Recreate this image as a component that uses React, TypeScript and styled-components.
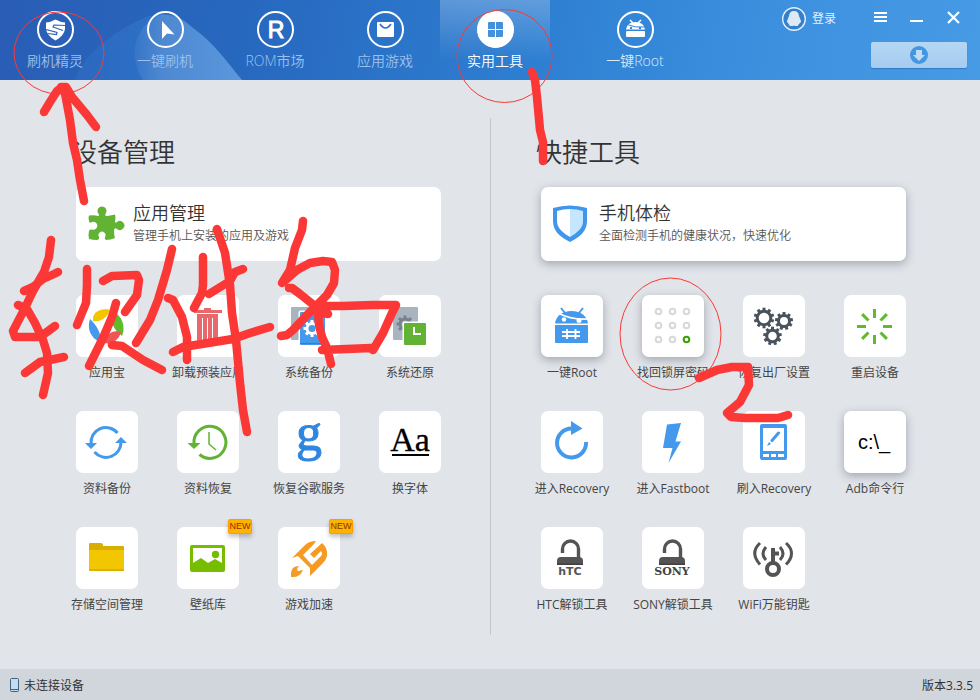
import React from 'react';
import styled, { createGlobalStyle, css } from 'styled-components';

const sans = '"Open Sans", "Noto Sans CJK SC", sans-serif';

const GlobalStyle = createGlobalStyle`
  * { box-sizing: border-box; }
  body { margin: 0; font-family: ${sans}; background: #e1e4e9; }
  button { font: inherit; color: inherit; border: 0; padding: 0; background: none; cursor: pointer; }
  svg { display: block; overflow: visible; }
`;

const Page = styled.div`
  position: relative;
  display: flex;
  flex-direction: column;
  min-height: 100vh;
  overflow: hidden;
`;

const Header = styled.header`
  position: relative;
  display: flex;
  justify-content: space-between;
  height: 80px;
  background: linear-gradient(100deg, #2a5db5 0%, #2768bf 25%, #2e7fd2 55%, #3a8edd 75%, #479be5 100%);
`;

const Mountain = styled.svg`
  position: absolute;
  left: 75px;
  top: 0;
`;

const Nav = styled.nav`
  position: relative;
  display: flex;
`;

const NavButton = styled.button<{ $active?: boolean; $spaced?: boolean }>`
  display: flex;
  flex-direction: column;
  align-items: center;
  width: 110px;
  padding-top: 11px;
  margin-left: ${p => (p.$spaced ? 30 : 0)}px;
  font-size: 14px;
  font-weight: 350;
  line-height: 20px;
  color: ${p => (p.$active ? '#fff' : p.$spaced ? '#d8eafb' : '#9cc0ea')};
  ${p => p.$active && css`background: linear-gradient(180deg, rgba(255,255,255,.24), rgba(255,255,255,0) 75%);`}
  svg { margin-bottom: 3px; }
`;

const HeaderSide = styled.div`
  display: flex;
  flex-direction: column;
  gap: 11px;
  width: 198px;
  padding: 7px 13px 0 0;
`;

const WindowRow = styled.div`
  display: flex;
  align-items: flex-start;
  gap: 23px;
  height: 24px;
`;

const LoginButton = styled.button`
  display: flex;
  align-items: center;
  gap: 6px;
  margin-right: 15px;
  font-size: 12px;
  line-height: 24px;
  color: #e4f0fb;
`;

const WindowButton = styled.button`
  width: 13px;
  height: 20px;
`;

const DownloadButton = styled.button`
  align-self: flex-end;
  display: flex;
  align-items: center;
  justify-content: center;
  width: 96px;
  height: 26px;
  border-radius: 2px;
  background: linear-gradient(#b5d7f3, #a4cbf0);
  box-shadow: 0 1px 1px rgba(20, 80, 150, .4);
`;

const Main = styled.main`
  display: flex;
  flex: 1;
  background: #e1e4e9;
`;

const Divider = styled.div`
  width: 1px;
  margin: 38px 0 34px;
  background: #c4c8cc;
`;

const Section = styled.section<{ $side: 'left' | 'right' }>`
  flex: 1;
  padding: ${p => (p.$side === 'left' ? '54px 49px 30px 76px' : '54px 74px 30px 50px')};
`;

const SectionTitle = styled.h2`
  margin: 0 0 17px -5px;
  font-size: 26px;
  font-weight: 350;
  line-height: 36px;
  color: #333;
`;

const raised = css`box-shadow: 0 3px 10px rgba(50, 60, 70, .36);`;

const FeatureCard = styled.button<{ $raised?: boolean }>`
  display: flex;
  align-items: center;
  gap: 9px;
  width: 100%;
  height: 74px;
  padding-left: 12px;
  text-align: left;
  background: #fff;
  border-radius: 7px;
  ${p => p.$raised && raised}
`;

const FeatureTitle = styled.div`
  font-size: 18px;
  font-weight: 350;
  line-height: 23px;
  color: #333;
`;

const FeatureText = styled.div`
  font-size: 12px;
  font-weight: 350;
  line-height: 22px;
  color: #555;
`;

const Grid = styled.div`
  display: grid;
  grid-template-columns: repeat(4, 62px);
  justify-content: space-between;
  row-gap: 30px;
  margin-top: 34px;
`;

const Tool = styled.button`
  display: flex;
  flex-direction: column;
  align-items: center;
  gap: 8px;
  font-size: 12px;
  line-height: 16px;
  color: #444;
  white-space: nowrap;
`;

const Tile = styled.span<{ $raised?: boolean }>`
  position: relative;
  width: 62px;
  height: 62px;
  border-radius: 7px;
  background: #fff;
  ${p => p.$raised && raised}
`;

const NewBadge = styled.span`
  position: absolute;
  top: -8px;
  right: -13px;
  width: 24px;
  height: 15px;
  border: 1px solid #ff9c00;
  border-radius: 2px;
  background: #ffb300;
  box-shadow: 0 3px 4px rgba(60, 60, 70, .3);
  font: 9px/13px "Liberation Sans", sans-serif;
  text-align: center;
  color: #8a3200;
`;

const Footer = styled.footer`
  display: flex;
  align-items: center;
  justify-content: space-between;
  height: 31px;
  padding: 0 7px 0 10px;
  background: #d0d6dc;
  font-size: 12px;
  color: #333;
`;

const Status = styled.div`
  display: flex;
  align-items: center;
  gap: 5px;
`;

const Ink = styled.svg`
  position: absolute;
  left: 0;
  top: 0;
  pointer-events: none;
`;

const blue = '#4499ed';
const green = '#62b233';
const dark = '#545454';

const Gear = ({ x, y, r, color, w = 3, teeth = 8 }: { x: number; y: number; r: number; color: string; w?: number; teeth?: number }) => (
  <g stroke={color} fill="none">
    <circle cx={x} cy={y} r={r} strokeWidth={w} />
    {Array.from({ length: teeth }, (_, i) => (
      <path key={i} strokeWidth="3" transform={`rotate(${(i * 360) / teeth} ${x} ${y})`} d={`M${x} ${y - r}v${-w / 2 - 2}`} />
    ))}
  </g>
);

const Lock = () => (
  <>
    <path d="M21.500 26v-4a8 8 0 0 1 16 0v10" fill="none" stroke={dark} strokeWidth="3.400" />
    <path d="M16 38v-4q0-4 4-4h18q4 0 4 4v4z" fill={dark} />
    <path d="M16 36.500h26v1.500h-26z" fill="#404040" />
  </>
);

const icons: Record<string, React.ReactNode> = {
  yyb: (
    <>
      <path d="M17 26C16 17 24 13 33 14.500C34 20 25 28 17 26z" fill="#f2c500" />
      <path d="M37 17C46 20 50 32 46 41C38 36 33 25 37 17z" fill="#60bb2a" />
      <path d="M14 24C20 30 26 38 24 47C14 43 11 33 14 24z" fill={blue} />
      <path d="M28 48C30 39 37 34 45 37C43 45 36 50 28 48z" fill="#f05454" />
    </>
  ),
  trash: (
    <g fill="#e8696b">
      <path d="M27 13h7v2h11v3H17v-3h10z" />
      <path d="M20 19h21v30H20z" />
      <path d="M25.500 23v24M30.500 23v24M35.500 23v24" stroke="#fff" />
    </g>
  ),
  sysBackup: (
    <>
      <rect x="13" y="12" width="30" height="33" rx="1" fill="#aab4bf" />
      <rect x="20.500" y="15.500" width="28" height="36" rx="2" fill="#fff" />
      <rect x="22" y="17" width="25" height="33" rx="1" fill={blue} />
      <path d="M22 48.500h25" stroke="#2f7fd0" />
      <Gear x={34} y={33.5} r={5} color="#fff" />
    </>
  ),
  sysRestore: (
    <>
      <rect x="14" y="12" width="25" height="33" rx="1" fill="#aab4bf" />
      <Gear x={26} y={29} r={5} color="#77828e" />
      <rect x="23.500" y="26.500" width="26" height="26" rx="2" fill="#fff" />
      <rect x="25" y="28" width="22" height="22" rx="1" fill={green} />
      <path d="M35 32v7h7" fill="none" stroke="#fff" strokeWidth="2" />
    </>
  ),
  dataBackup: (
    <>
      <path d="M15 33A15 15 0 0 1 41.500 22M18.500 41A15 15 0 0 0 45 31" fill="none" stroke={blue} strokeWidth="3" />
      <path d="M9 32h12l-6 6zM39 32h12l-6-6z" fill={blue} />
    </>
  ),
  dataRestore: (
    <>
      <path d="M17 33A16 16 0 1 1 22.500 43.500" fill="none" stroke={green} strokeWidth="3" />
      <path d="M10.500 32h13l-6.500 6z" fill={green} />
      <path d="M32 21v12l7 6" fill="none" stroke={green} strokeWidth="1.500" />
    </>
  ),
  google: (
    <text x="31" y="39" fontFamily="Liberation Serif, serif" fontSize="52" fill="#2f86e0" stroke="#2f86e0" strokeWidth="1" textAnchor="middle">g</text>
  ),
  font: (
    <>
      <text x="31" y="40" fontFamily="Liberation Serif, serif" fontSize="34" textAnchor="middle" stroke="#000" strokeWidth=".3">Aa</text>
      <path d="M13 44h37" stroke="#000" strokeWidth="2" />
    </>
  ),
  folder: (
    <>
      <path d="M13 17q0-1 1-1h11q2 0 2 2v1h20q1 0 1 1v6H13z" fill="#d8ae00" />
      <path d="M13 23h35v20q0 1-1 1H14q-1 0-1-1z" fill="#f2c600" />
      <path d="M13 42h35v1q0 1-1 1H14q-1 0-1-1z" fill="#dbb100" />
    </>
  ),
  picture: (
    <>
      <rect x="13" y="18" width="35" height="27" rx="2" fill="#76bd00" />
      <path d="M16 21h29v15l-7-4-7 4-7-5-8 5z" fill="#fff" />
      <circle cx="38.500" cy="27.500" r="3.700" fill="#76bd00" />
    </>
  ),
  rocket: (
    <g fill="#f59b23">
      <path d="M14 31L27 18Q31 14 38 14L36 17L25 28L34 38L43 29Q45 27 43 24L36 31L32 27L44 16Q50 21 49 29Q48 33 45 36L32 49V41L20 29z" />
      <path d="M13 50Q12 39 21 39Q18 42 20 44L25 43Q22 51 13 50z" />
    </g>
  ),
  root: (
    <>
      <path d="M14 28.500C15 21 21 16 30.500 16S46 21 47 28.500z" fill={blue} />
      <path d="M20 13l4 5M42 13l-4 5" stroke={blue} strokeWidth="2" />
      <path d="M17 18Q30 25 47 24" fill="none" stroke="#fff" strokeWidth="1.500" />
      <circle cx="23" cy="24.500" r="2.200" fill="#fff" />
      <circle cx="38" cy="25.500" r="2.500" fill="#fff" />
      <path d="M14 30h33v17q0 1-1 1H15q-1 0-1-1z" fill={blue} />
      <path d="M21 37h18M21 41h18M26 34v10M34.500 34v10" stroke="#fff" strokeWidth="1.800" />
    </>
  ),
  pattern: (
    <g fill="none" strokeWidth="2">
      {[17, 31, 45].map(y => [16, 30, 44].map(x => (
        <circle key={`${x}-${y}`} cx={x + 0.5} cy={y - 0.5} r="2.800" stroke={x === 44 && y === 45 ? '#3aa00a' : '#d8d8d8'} />
      )))}
    </g>
  ),
  gears: (
    <>
      <Gear x={21} y={23} r={6.8} color="#4a525c" teeth={10} />
      <Gear x={41} y={26} r={5.5} color="#4a525c" teeth={9} />
      <Gear x={29.5} y={41} r={5.8} color="#4a525c" teeth={9} />
    </>
  ),
  restart: (
    <g stroke="#5fba2c" strokeWidth="3">
      {[0, 45, 90, 135, 180, 225, 270, 315].map(a => (
        <path key={a} transform={`rotate(${a} 30.500 31.500)`} d="M30.500 14v9" />
      ))}
    </g>
  ),
  recovery: (
    <>
      <path d="M31 17.500A14.500 14.500 0 1 0 45 31" fill="none" stroke={blue} strokeWidth="4" />
      <path d="M30 10l11.500 7.500L30 24z" fill={blue} />
    </>
  ),
  bolt: <path d="M25 13.500L39 12L33.500 30.500H39L26.500 52L30.500 37H21z" fill={blue} />,
  flash: (
    <>
      <rect x="17" y="13" width="27" height="36" rx="2" fill={blue} />
      <path d="M20 17h21v23H20zM20 43h6v3h-6zM28 43h5v3h-5zM35 43h6v3h-6z" fill="#fff" />
      <path d="M35.500 22L29 29.500" stroke={blue} strokeWidth="3" strokeLinecap="round" />
      <path d="M24 35l2-4 2 2z" fill={blue} />
    </>
  ),
  cmd: <text x="30" y="38" fontFamily="Liberation Sans, sans-serif" fontSize="20" textAnchor="middle">c:\_</text>,
  htc: (
    <>
      <Lock />
      <text x="29" y="48" fontFamily="DejaVu Sans, sans-serif" fontSize="11" fontWeight="700" fill={dark} textAnchor="middle">hTC</text>
    </>
  ),
  sony: (
    <>
      <g transform="translate(1 0)"><Lock /></g>
      <text x="30" y="48" fontFamily="DejaVu Serif, serif" fontSize="11" fontWeight="700" fill="#444" textAnchor="middle">SONY</text>
    </>
  ),
  wifi: (
    <>
      <g fill="none" stroke={dark} strokeWidth="3">
        <path d="M17 16Q6.500 26 17 37.500M23 20Q17 27 23 33M37 20Q43 27 37 33M43 16Q54 26 43 37.500" />
        <circle cx="30" cy="42" r="6" strokeWidth="4" />
      </g>
      <path d="M28 21h4v3.500h4v4h-4V37h-4z" fill={dark} />
    </>
  ),
};

type ToolItem = { label: string; icon: string; fresh?: boolean; raised?: boolean };

const deviceTools: ToolItem[] = [
  { label: '应用宝', icon: 'yyb' },
  { label: '卸载预装应用', icon: 'trash' },
  { label: '系统备份', icon: 'sysBackup' },
  { label: '系统还原', icon: 'sysRestore' },
  { label: '资料备份', icon: 'dataBackup' },
  { label: '资料恢复', icon: 'dataRestore' },
  { label: '恢复谷歌服务', icon: 'google' },
  { label: '换字体', icon: 'font' },
  { label: '存储空间管理', icon: 'folder' },
  { label: '壁纸库', icon: 'picture', fresh: true },
  { label: '游戏加速', icon: 'rocket', fresh: true },
];

const quickTools: ToolItem[] = [
  { label: '一键Root', icon: 'root', raised: true },
  { label: '找回锁屏密码', icon: 'pattern', raised: true },
  { label: '恢复出厂设置', icon: 'gears' },
  { label: '重启设备', icon: 'restart' },
  { label: '进入Recovery', icon: 'recovery' },
  { label: '进入Fastboot', icon: 'bolt' },
  { label: '刷入Recovery', icon: 'flash' },
  { label: 'Adb命令行', icon: 'cmd', raised: true },
  { label: 'HTC解锁工具', icon: 'htc' },
  { label: 'SONY解锁工具', icon: 'sony' },
  { label: 'WiFi万能钥匙', icon: 'wifi' },
];

const ToolGrid = ({ tools }: { tools: ToolItem[] }) => (
  <Grid>
    {tools.map(t => (
      <Tool key={t.label}>
        <Tile $raised={t.raised}>
          <svg width="62" height="62" viewBox="0 0 62 62" aria-hidden="true">{icons[t.icon]}</svg>
          {t.fresh && <NewBadge>NEW</NewBadge>}
        </Tile>
        {t.label}
      </Tool>
    ))}
  </Grid>
);

const navItems: { label: string; glyph: React.ReactNode; active?: boolean; spaced?: boolean }[] = [
  {
    label: '刷机精灵',
    glyph: (
      <>
        <path d="M9 11.500Q14 11 18.500 8.500Q23 11 28 11.500V18Q27 25 18.500 29.500Q10 25 9 18z" fill="#fff" />
        <path d="M28.500 14.500L17 14L16 16L26 19.500M9 18.500L20 21.500L19.500 23.500L10.500 22.500" fill="none" stroke="#2a62ba" strokeWidth="1.200" />
      </>
    ),
  },
  { label: '一键刷机', glyph: <path d="M15 10L27.500 23.500L20 22.500L15 28z" fill="#fff" /> },
  {
    label: 'ROM市场',
    glyph: <text x="19" y="27" fontFamily="Liberation Sans, sans-serif" fontSize="23" fill="#fff" stroke="#fff" strokeWidth="1" textAnchor="middle">R</text>,
  },
  {
    label: '应用游戏',
    glyph: (
      <>
        <rect x="10" y="11" width="17" height="15" rx="1" fill="#fff" />
        <path d="M13 13Q18.500 21 24 13" fill="none" stroke="#2b70c8" strokeWidth="1.500" />
      </>
    ),
  },
  {
    label: '实用工具',
    active: true,
    glyph: (
      <>
        <circle cx="18.500" cy="18.500" r="18" fill="#fff" />
        <path d="M11 12q0-1 1-1h6v7h-7zM19 11h6q1 0 1 1v6h-7zM11 19h7v7h-6q-1 0-1-1zM19 19h7v6q0 1-1 1h-6z" fill="#4490dc" />
      </>
    ),
  },
  {
    label: '一键Root',
    spaced: true,
    glyph: (
      <>
        <path d="M9 18.500Q10 11 18.500 11T28 18.500z" fill="#fff" />
        <path d="M13 9l3 3M24 9l-3 3" stroke="#fff" strokeWidth="1.500" />
        <path d="M10 13.500Q18 17 28 16" fill="none" stroke="#3686d8" />
        <circle cx="14" cy="17" r="1.200" fill="#3686d8" />
        <circle cx="23" cy="17" r="1.200" fill="#3686d8" />
        <rect x="9" y="20" width="19" height="6" rx="1" fill="#fff" />
      </>
    ),
  },
];

const strokes = [
  'M61 87H66M44 112L50 102L57 91L62 87M66 87L72 97L87 115L96 127M64 88L67 104L70 120L73 143L77 160L80 180L84 201',
  'M532 72L535 80L537 97L540 130L543 142V161',
  'M51 240L49 257L44 272L33 291L25 308L13 331L15 337H40L55 326M58 272L54 274L43 279L33 287L24 291M18 305L27 309L35 323L43 340L47 353L48 373L43 395M25 373L40 362L64 357',
  'M87 269V285L86 303L77 325M103 281L112 276L137 275L139 280L137 295L125 312M172 249L167 270L158 300L150 320L136 343M116 303L112 317L103 338L89 366M112 345L122 346L143 360L162 370',
  'M168 298L173 300L182 317L187 337V360M203 257V285L202 293L194 308M209 294L230 281L235 272L243 269M217 229L225 253L230 285L232 313L236 340L240 383L243 410L247 432M173 352L183 347L233 339L250 333L270 327',
  'M303 221L302 230L295 248L290 270L282 283L297 270L310 263L323 261L332 262L335 270L334 283L327 295L310 312L293 330L287 335L281 336M289 288H292L300 294L315 306L343 306L373 305H396L392 313L383 333L373 350L371 348L322 350M328 314L318 312L319 325L322 337L327 348L331 364',
  'M699 378L717 370L732 367L748 367L749 385L740 402L727 413L731 417L745 418L778 418L788 415',
];

export default function App() {
  return (
    <Page>
      <GlobalStyle />
      <Header>
        <Mountain width="170" height="80" viewBox="0 0 170 80" aria-hidden="true">
          <defs>
            <linearGradient id="slope" x1="0" x2="1">
              <stop offset="0" stopColor="#3a8fe0" stopOpacity=".15" />
              <stop offset="1" stopColor="#3a8fe0" stopOpacity=".45" />
            </linearGradient>
            <linearGradient id="peak" x1="0" x2="1">
              <stop offset="0" stopColor="#8bb4e6" stopOpacity=".1" />
              <stop offset=".25" stopColor="#8bb4e6" stopOpacity=".34" />
              <stop offset="1" stopColor="#84b4ea" stopOpacity=".5" />
            </linearGradient>
          </defs>
          <path d="M0 80C8 56 35 32 74 16Q96 10 118 28C138 42 152 62 167 80z" fill="url(#slope)" />
          <path d="M68 80C58 64 56 44 68 28Q76 17 88 14Q104 14 118 28C138 42 152 62 167 80z" fill="url(#peak)" />
        </Mountain>
        <Nav>
          {navItems.map(n => (
            <NavButton key={n.label} $active={n.active} $spaced={n.spaced}>
              <svg width="37" height="37" viewBox="0 0 37 37" aria-hidden="true">
                <circle cx="18.500" cy="18.500" r="17.500" fill="none" stroke="#fff" strokeWidth="2" />
                {n.glyph}
              </svg>
              {n.label}
            </NavButton>
          ))}
        </Nav>
        <HeaderSide>
          <WindowRow>
            <LoginButton>
              <svg width="24" height="24" viewBox="0 0 24 24" aria-hidden="true">
                <circle cx="12" cy="12" r="11.300" fill="#3580cc" stroke="#e4f1fc" strokeWidth="1.400" />
                <path d="M12 4Q16.500 4 17 9L19 14Q19.500 16 18 15.500Q17.500 17 16 18V19H13L12 18.500L11 19H7.500V18Q6 17 6 15.500Q4.500 16 5 14L7 9Q7.500 4 12 4z" fill="#dce9f6" />
              </svg>
              登录
            </LoginButton>
            <WindowButton aria-label="菜单">
              <svg width="13" height="20" viewBox="0 0 13 20"><path d="M0 6h13M0 10h13M0 14h13" stroke="#fff" strokeWidth="2" /></svg>
            </WindowButton>
            <WindowButton aria-label="最小化">
              <svg width="13" height="20" viewBox="0 0 13 20"><path d="M0 14h13" stroke="#fff" strokeWidth="2" /></svg>
            </WindowButton>
            <WindowButton aria-label="关闭">
              <svg width="13" height="20" viewBox="0 0 13 20"><path d="M2 5l11 11M13 5L2 16" stroke="#fff" strokeWidth="2.200" /></svg>
            </WindowButton>
          </WindowRow>
          <DownloadButton aria-label="下载">
            <svg width="18" height="18" viewBox="0 0 18 18">
              <circle cx="9" cy="9" r="9" fill="#4296e2" />
              <path d="M6 4h6v5h3l-6 6-6-6h3z" fill="#c0dcf5" />
            </svg>
          </DownloadButton>
        </HeaderSide>
      </Header>
      <Main>
        <Section $side="left">
          <SectionTitle>设备管理</SectionTitle>
          <FeatureCard>
            <svg width="36" height="36" viewBox="0 0 36 36" aria-hidden="true">
              <path d="M1 9.500Q7 9 10 10Q12 10 10 7A4.500 4.500 0 1 1 18 7Q16 10 19 10Q24 9 27 8.500Q28 12 27 15Q27 18 29 16A4.500 4.500 0 1 1 29 23Q26 21 26 25Q26 29 27 32Q23 34 18 34Q16 33 17 31A3.500 3.500 0 1 0 11 31Q12 33 9 34Q5 34 1 33Q0 29 1 25Q1 23 4 23.500A4 4 0 1 0 4 16Q1 18 1 15Q0 12 1 9.500z" fill={green} />
            </svg>
            <div>
              <FeatureTitle>应用管理</FeatureTitle>
              <FeatureText>管理手机上安装的应用及游戏</FeatureText>
            </div>
          </FeatureCard>
          <ToolGrid tools={deviceTools} />
        </Section>
        <Divider />
        <Section $side="right">
          <SectionTitle>快捷工具</SectionTitle>
          <FeatureCard $raised>
            <svg width="37" height="38" viewBox="0 0 37 38" aria-hidden="true">
              <path d="M0 3Q17 -2 34 3V16C34 26 27 32 17 37C7 32 0 26 0 16z" fill="#4095ec" />
              <path d="M4 6Q10 4 17 4V32C9 27 4 23 4 16z" fill="#fff" />
              <path d="M30 6Q24 4 17 4V32C25 27 30 23 30 16z" fill="#c5e6ff" />
            </svg>
            <div>
              <FeatureTitle>手机体检</FeatureTitle>
              <FeatureText>全面检测手机的健康状况，快速优化</FeatureText>
            </div>
          </FeatureCard>
          <ToolGrid tools={quickTools} />
        </Section>
      </Main>
      <Footer>
        <Status>
          <svg width="9" height="14" viewBox="0 0 9 14" aria-hidden="true">
            <rect x=".5" y=".5" width="8" height="13" rx="1" fill="#c3dcf0" stroke="#44617c" />
            <path d="M1 11.500h7" stroke="#44617c" />
          </svg>
          未连接设备
        </Status>
        <span>版本3.3.5</span>
      </Footer>
      <Ink width="980" height="700" viewBox="0 0 980 700" fill="none" stroke="#fc3837" aria-hidden="true">
        <ellipse cx="59" cy="53" rx="45" ry="41" />
        <ellipse cx="504.500" cy="56" rx="47.500" ry="46.500" />
        <ellipse cx="670.500" cy="334" rx="50.500" ry="56" />
        <g strokeWidth="8.500" strokeLinecap="round" strokeLinejoin="round">
          {strokes.map(d => <path key={d} d={d} />)}
        </g>
      </Ink>
    </Page>
  );
}
